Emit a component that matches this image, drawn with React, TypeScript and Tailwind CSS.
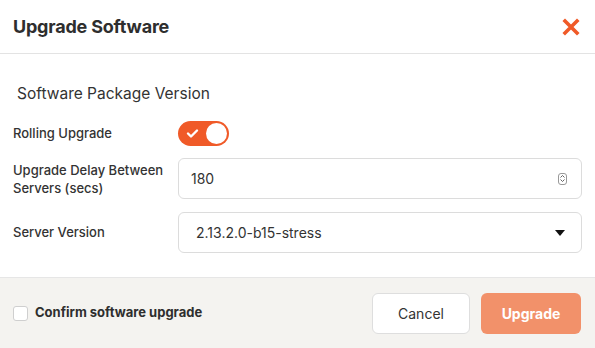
import React, { useState } from 'react';

const App: React.FC = () => {
  const [rolling, setRolling] = useState(true);
  const [confirm, setConfirm] = useState(false);

  return (
    <div className="w-[595px] h-[348px] bg-white flex flex-col text-[#333]" style={{ fontFamily: 'Inter, "Noto Sans", sans-serif' }}>
      {/* header */}
      <div className="h-[54px] flex items-center justify-between pl-[13px] pr-[15px] border-b border-[#e3e3e3] shrink-0">
        <h2 className="text-[18px] font-bold tracking-[-0.2px] text-[#2e2e2e]">Upgrade Software</h2>
        <button className="text-[#f05a28]">
          <svg width="18" height="18" viewBox="0 0 18 18">
            <path d="M3 3 L15 15 M15 3 L3 15" stroke="currentColor" strokeWidth="3.6" strokeLinecap="square" />
          </svg>
        </button>
      </div>

      {/* body */}
      <div className="flex-1 px-[13px] pt-[29px]">
        <h3 className="text-[15.5px] text-[#333] pl-[4px] leading-[22px]">Software Package Version</h3>

        <div className="mt-[16px] flex items-center h-[25px]">
          <span className="w-[165px] text-[13px] font-medium">Rolling Upgrade</span>
          <button
            onClick={() => setRolling(!rolling)}
            className="w-[51px] h-[25px] rounded-full bg-[#f05a28] flex items-center justify-between px-[2px]"
          >
            <svg width="13" height="13" viewBox="0 0 13 13" className="ml-[6px]">
              <path d="M2 6.5 L5 9.5 L11 3.5" stroke="white" strokeWidth="2.4" fill="none" strokeLinecap="round" strokeLinejoin="round" />
            </svg>
            <span className="w-[21px] h-[21px] rounded-full bg-white" />
          </button>
        </div>

        <div className="mt-[12px] flex items-center">
          <span className="w-[165px] text-[13px] font-medium leading-[18px]">
            Upgrade Delay Between<br />Servers (secs)
          </span>
          <div className="flex-1 h-[41px] rounded-[6px] border border-[#dcdcdc] flex items-center justify-between pl-[12px] pr-[14px]">
            <span className="text-[14px] text-[#333]">180</span>
            <span className="w-[9px] h-[12px] rounded-[3px] border border-[#999] flex flex-col items-center justify-center gap-[1px]">
              <svg width="5" height="3" viewBox="0 0 5 3"><path d="M0.5 2.5 L2.5 0.5 L4.5 2.5" stroke="#555" strokeWidth="0.9" fill="none" /></svg>
              <svg width="5" height="3" viewBox="0 0 5 3"><path d="M0.5 0.5 L2.5 2.5 L4.5 0.5" stroke="#555" strokeWidth="0.9" fill="none" /></svg>
            </span>
          </div>
        </div>

        <div className="mt-[13px] flex items-center">
          <span className="w-[165px] text-[13px] font-medium">Server Version</span>
          <div className="flex-1 h-[41px] rounded-[6px] border border-[#dcdcdc] flex items-center justify-between pl-[17px] pr-[16px]">
            <span className="text-[14px] text-[#333]">2.13.2.0-b15-stress</span>
            <svg width="10" height="6" viewBox="0 0 10 6"><path d="M0 0 H10 L5 6 Z" fill="#111" /></svg>
          </div>
        </div>
      </div>

      {/* footer */}
      <div className="h-[71px] shrink-0 bg-[#f4f3f0] border-t border-[#e6e6e6] flex items-center justify-between pl-[13px] pr-[14px]">
        <label className="flex items-center gap-[7px] cursor-pointer">
          <input type="checkbox" checked={confirm} onChange={() => setConfirm(!confirm)} className="sr-only" />
          <span className="w-[15px] h-[15px] rounded-[3px] border border-[#cfcfcf] bg-white" />
          <span className="text-[13px] font-bold text-[#2e2e2e]">Confirm software upgrade</span>
        </label>
        <div className="flex items-center gap-[11px]">
          <button className="w-[98px] h-[41px] rounded-[6px] border border-[#dedede] bg-white text-[14px] text-[#333]">Cancel</button>
          <button className="w-[100px] h-[41px] rounded-[6px] bg-[#f2916a] text-[14px] font-bold text-white">Upgrade</button>
        </div>
      </div>
    </div>
  );
};

export default App;
